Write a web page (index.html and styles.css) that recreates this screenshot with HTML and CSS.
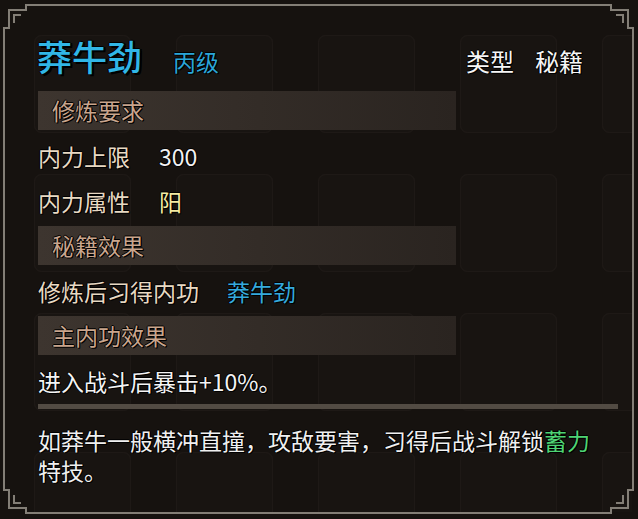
FILE: index.html
```html
<!DOCTYPE html>
<html>
	<head>
		<meta charset="utf-8">
		<title>莽牛劲</title>
		<link rel="stylesheet" href="styles.css">
	</head>
	<body>
		<div class="panel">
			<svg class="backdrop" width="638" height="519" viewBox="0 0 638 519">
				<defs>
					<pattern id="slots" x="34" y="35" width="142" height="139" patternUnits="userSpaceOnUse">
						<rect x="0.5" y="0.5" width="96" height="97" rx="7" fill="#181411" stroke="#1e1916"/>
					</pattern>
				</defs>
				<rect x="6" y="7" width="626" height="505" fill="url(#slots)"/>
				<g fill="none" stroke="#837e76" stroke-width="2">
					<path d="M4 28 H9 V10 H26 V5 H611 V10 H628 V28 H633 V490 H628 V508 H611 V513 H26 V508 H9 V490 H4 Z"/>
					<path d="M14 23 V15 H21"/>
					<path d="M623 23 V15 H616"/>
					<path d="M14 495 V503 H21"/>
					<path d="M623 495 V503 H616"/>
				</g>
			</svg>
			<div class="content">
				<div class="head">
					<div class="name">
						<span class="title">莽牛劲</span>
						<span class="grade">丙级</span>
					</div>
					<div class="kind">
						<span>类型</span>
						<span>秘籍</span>
					</div>
				</div>

				<div class="bar">修炼要求</div>
				<div class="row"><span class="label">内力上限</span><span class="value">300</span></div>
				<div class="row"><span class="label">内力属性</span><span class="value yang">阳</span></div>

				<div class="bar">秘籍效果</div>
				<div class="row"><span class="label">修炼后习得内功</span><span class="value skill">莽牛劲</span></div>

				<div class="bar">主内功效果</div>
				<div class="row"><span class="effect">进入战斗后暴击+10%。</span></div>

				<div class="divider"></div>

				<p class="desc">如莽牛一般横冲直撞，攻敌要害，习得后战斗解锁<span class="green">蓄力</span>特技。</p>
			</div>
		</div>
	</body>
</html>
```

FILE: styles.css
```css
*{
	margin: 0;
	padding: 0;
}
body{
	background-color: #16120f;
	font-family: "Noto Sans CJK SC", "Noto Sans", sans-serif;
}
.panel{
	width: 638px;
	height: 519px;
	position: relative;
	background-color: #16120f;
	overflow: hidden;
}
.backdrop{
	position: absolute;
	left: 0;
	top: 0;
}
.content{
	position: relative;
	padding: 39px 20px 0 38px;
	color: #e8d9c3;
	font-size: 23px;
	line-height: 23px;
	text-shadow: 1px 1px 0 #000, -1px 0 0 #000, 0 -1px 0 #000, 1px 0 0 #000;
}
.head{
	display: flex;
	justify-content: space-between;
	align-items: baseline;
	padding-right: 35px;
	margin-bottom: 18px;
}
.name{
	display: flex;
	align-items: baseline;
	gap: 31px;
	margin-left: -1px;
}
.title{
	font-size: 35px;
	line-height: 34px;
	font-weight: 500;
	color: #31b6e6;
	text-shadow: 2px 2px 0 #000, -1px 0 0 #000, 0 -1px 0 #000, 2px 0 0 #000;
}
.grade{
	color: #2ba6d8;
}
.kind{
	display: flex;
	gap: 21px;
	color: #f6f6f6;
	font-size: 24px;
	line-height: 24px;
}
.bar{
	width: 404px;
	height: 39px;
	line-height: 39px;
	padding-left: 14px;
	margin-top: 13px;
	color: #c9a58d;
	background: linear-gradient(90deg, #3d352f, #2a2420);
}
.head + .bar{
	margin-top: 0;
}
.row{
	display: flex;
	gap: 29px;
	padding-top: 22px;
}
.bar + .row{
	padding-top: 15px;
}
.value{
	color: #f2f2f2;
}
.yang{
	color: #f3eba2;
}
.skill{
	margin-left: -1px;
	color: #35a9dc;
}
.effect{
	color: #f4f4f4;
}
.divider{
	height: 5px;
	margin-top: 11px;
	background-color: #524b43;
}
.desc{
	max-width: 570px;
	margin-top: 16px;
	line-height: 30px;
	color: #f0f0f0;
}
.green{
	color: #4fd474;
}
```
